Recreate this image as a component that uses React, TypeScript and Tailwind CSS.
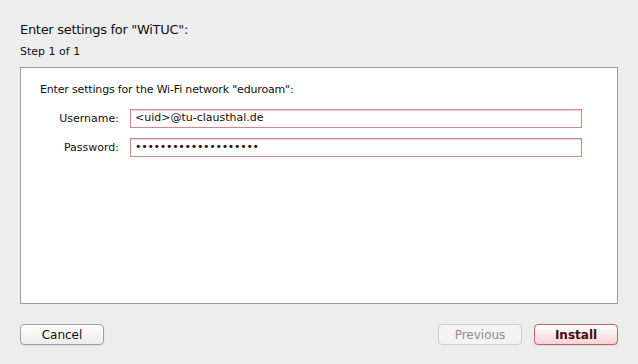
import React from 'react';

const font = { fontFamily: '"DejaVu Sans", "Liberation Sans", sans-serif' };

export default function App() {
  return (
    <div className="flex h-[364px] w-[638px] flex-col bg-[#ededed] px-[20px] text-[#111]" style={font}>
      <div className="mt-[21px] h-[18px] text-[13px] leading-[18px] tracking-[-0.3px]">Enter settings for "WiTUC":</div>
      <div className="mt-[6px] h-[14px] text-[11px] leading-[14px]">Step 1 of 1</div>

      <div className="mt-[8px] flex h-[237px] flex-col border border-[#9c9c9c] bg-white px-[19px]">
        <div className="mt-[15px] h-[14px] text-[11px] leading-[14px] tracking-[-0.17px]">Enter settings for the Wi-Fi network "eduroam":</div>
        <div className="mt-[12px] flex flex-col gap-[10px]">
          <Field label="Username:" value="<uid>@tu-clausthal.de" />
          <Field label="Password:" value={'\u2022'.repeat(20)} password />
        </div>
      </div>

      <div className="mt-[20px] flex items-center">
        <Button label="Cancel" />
        <div className="flex-1" />
        <Button label="Previous" disabled />
        <div className="w-[12px]" />
        <Button label="Install" primary />
      </div>
    </div>
  );
}

function Field({ label, value, password }: { label: string; value: string; password?: boolean }) {
  return (
    <div className="flex items-center">
      <div className="w-[90px] pr-[11px] text-right text-[11px] leading-[14px]">{label}</div>
      <div className="flex h-[19px] w-[452px] items-center border border-[#cf8787] bg-white pl-[4px] shadow-[inset_0_1px_1px_#f1d4d4]">
        <span className={password ? 'text-[11px] tracking-[-0.3px] text-[#2a0606]' : 'text-[11px] text-[#2a0606]'}>{value}</span>
      </div>
    </div>
  );
}

function Button({ label, disabled, primary }: { label: string; disabled?: boolean; primary?: boolean }) {
  const base = 'flex h-[21px] w-[84px] items-center justify-center rounded-[4px] border text-[12px] leading-none';
  if (primary)
    return (
      <div className={`${base} border-[#c0626a] bg-gradient-to-b from-white to-[#f4d3d5] font-bold text-[#4a0a10] shadow-[0_1px_1px_rgba(0,0,0,0.08)]`}>
        {label}
      </div>
    );
  if (disabled)
    return <div className={`${base} border-[#cdcdcd] bg-[#f3f3f3] text-[#8e8e8e]`}>{label}</div>;
  return (
    <div className={`${base} border-[#a0a0a0] bg-gradient-to-b from-white to-[#ececec] text-[#111] shadow-[0_1px_1px_rgba(0,0,0,0.08)]`}>
      {label}
    </div>
  );
}
